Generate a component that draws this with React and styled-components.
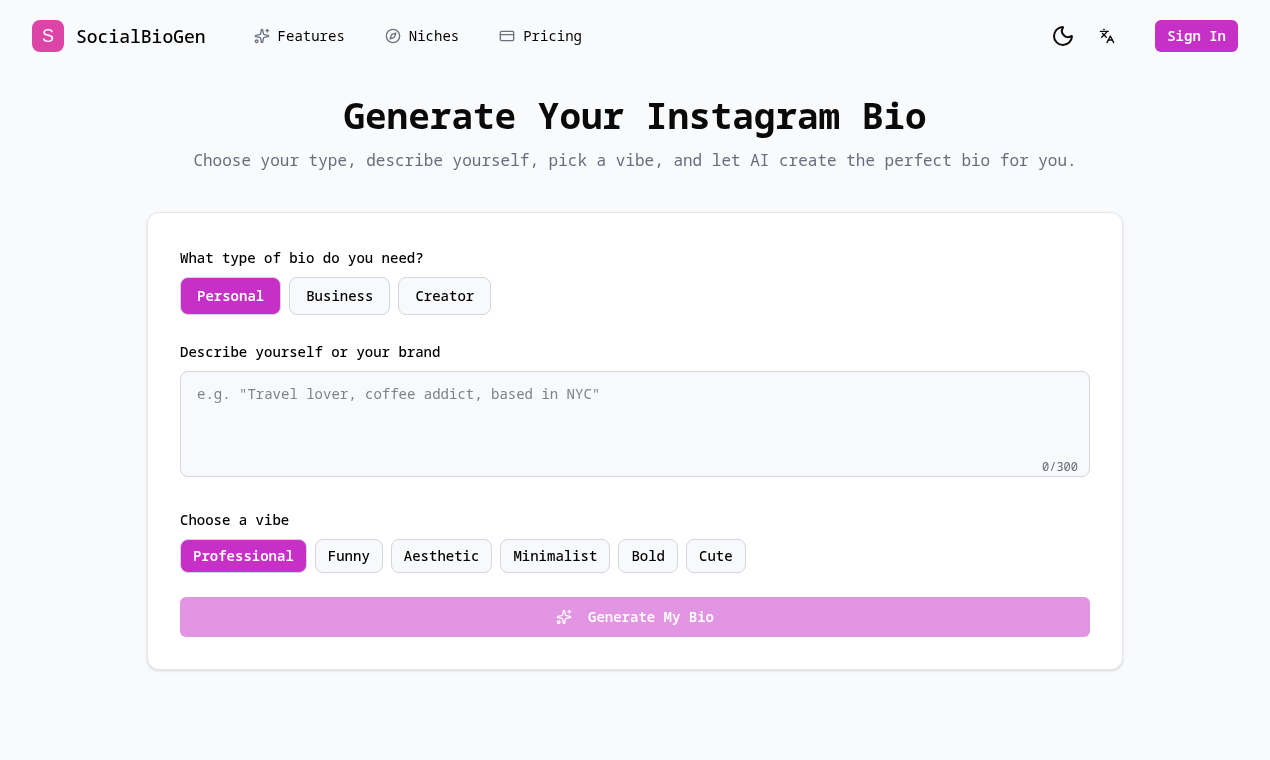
import React from "react";
import styled, { createGlobalStyle } from "styled-components";
import { Sparkles, Compass, CreditCard, Moon, Languages } from "lucide-react";

const Global = createGlobalStyle`
  html, body { margin: 0; padding: 0; background: #f9fafc; }
  body {
    font-family: "Noto Sans Mono", "DejaVu Sans Mono", monospace;
    color: #000;
  }
  * { box-sizing: border-box; }
`;

const Page = styled.div`
  width: 1270px;
  height: 760px;
  overflow: hidden;
  will-change: transform;
`;

const Header = styled.header`
  height: 72px;
  padding: 0 32px;
  display: flex;
  align-items: center;
`;

const Brand = styled.div`
  display: flex;
  align-items: center;
  gap: 12px;
  margin-right: 48px;
`;

const Logo = styled.div`
  width: 32px;
  height: 32px;
  border-radius: 8px;
  background: #dc44a8;
  color: #fff;
  display: flex;
  align-items: center;
  justify-content: center;
  font-family: "Liberation Sans", "Inter", sans-serif;
  font-size: 18px;
`;

const BrandName = styled.span`
  font-size: 18px;
  font-weight: 500;
`;

const Nav = styled.nav`
  display: flex;
  gap: 40px;
  flex: 1;
`;

const NavLink = styled.a`
  display: flex;
  align-items: center;
  gap: 8px;
  font-size: 14px;
  line-height: 20px;
  color: #000;
  svg { color: #6b7280; }
`;

const Actions = styled.div`
  display: flex;
  align-items: center;
  gap: 4px;
`;

const IconButton = styled.button`
  width: 40px;
  height: 40px;
  border: 0;
  padding: 0;
  background: transparent;
  color: #0a0a0a;
  display: flex;
  align-items: center;
  justify-content: center;
`;

const SignIn = styled.button`
  height: 32px;
  margin-left: 24px;
  padding: 0 12px;
  border: 0;
  border-radius: 6px;
  background: #c730c7;
  color: #fff;
  font: 600 14px/20px "Noto Sans Mono", "DejaVu Sans Mono", monospace;
`;

const Main = styled.main`
  display: flex;
  flex-direction: column;
  align-items: center;
`;

const Title = styled.h1`
  margin: 20px 0 0;
  font-size: 36px;
  line-height: 48px;
  font-weight: 700;
  color: #0a0a0a;
`;

const Subtitle = styled.p`
  margin: 8px 0 0;
  font-size: 16px;
  line-height: 24px;
  color: #666d7b;
`;

const Card = styled.section`
  width: 976px;
  margin-top: 40px;
  padding: 35px 32px 32px;
  background: #fff;
  border: 1px solid #e5e7eb;
  border-radius: 12px;
  box-shadow: 0 1px 3px rgba(0, 0, 0, 0.1), 0 1px 2px rgba(0, 0, 0, 0.06);
`;

const Label = styled.label`
  display: block;
  margin-bottom: 9px;
  font-size: 14px;
  line-height: 20px;
  font-weight: 500;
`;

const Choices = styled.div`
  display: flex;
  gap: 8px;
  margin-bottom: ${(p) => p.$after}px;
`;

const Choice = styled.button`
  height: ${(p) => (p.$small ? 34 : 38)}px;
  padding: 0 ${(p) => (p.$small ? 12 : 16)}px;
  border: 1px solid #d3d6de;
  border-radius: 8px;
  background: ${(p) => (p.$active ? "#c730c7" : "#f8f9fb")};
  color: ${(p) => (p.$active ? "#fff" : "#000")};
  font: ${(p) => (p.$active ? 600 : 500)} 14px/20px "Noto Sans Mono", "DejaVu Sans Mono", monospace;
`;

const TextBox = styled.div`
  position: relative;
  height: 106px;
  margin-bottom: 33px;
`;

const TextArea = styled.textarea`
  display: block;
  width: 100%;
  height: 100%;
  padding: 12px 16px;
  resize: none;
  border: 1px solid #d3d6de;
  border-radius: 8px;
  background: #f8f9fb;
  color: #000;
  font: 400 14px/20px "Noto Sans Mono", "DejaVu Sans Mono", monospace;
  &::placeholder { color: #7f8189; opacity: 1; }
`;

const Counter = styled.span`
  position: absolute;
  right: 12px;
  bottom: 2px;
  font-size: 12px;
  line-height: 16px;
  color: #666d7b;
`;

const Generate = styled.button`
  width: 100%;
  height: 40px;
  border: 0;
  border-radius: 6px;
  background: #e295e2;
  color: #fff;
  display: flex;
  align-items: center;
  justify-content: center;
  gap: 16px;
  font: 600 14px/20px "Noto Sans Mono", "DejaVu Sans Mono", monospace;
`;

const types = ["Personal", "Business", "Creator"];
const vibes = ["Professional", "Funny", "Aesthetic", "Minimalist", "Bold", "Cute"];

export default function App() {
  return (
    <Page>
      <Global />
      <Header>
        <Brand>
          <Logo>S</Logo>
          <BrandName>SocialBioGen</BrandName>
        </Brand>
        <Nav>
          <NavLink><Sparkles size={16} />Features</NavLink>
          <NavLink><Compass size={16} />Niches</NavLink>
          <NavLink><CreditCard size={16} />Pricing</NavLink>
        </Nav>
        <Actions>
          <IconButton><Moon size={24} /></IconButton>
          <IconButton><Languages size={16} /></IconButton>
          <SignIn>Sign In</SignIn>
        </Actions>
      </Header>
      <Main>
        <Title>Generate Your Instagram Bio</Title>
        <Subtitle>Choose your type, describe yourself, pick a vibe, and let AI create the perfect bio for you.</Subtitle>
        <Card>
          <Label>What type of bio do you need?</Label>
          <Choices $after={27}>
            {types.map((t, i) => (
              <Choice key={t} $active={i === 0}>{t}</Choice>
            ))}
          </Choices>
          <Label>Describe yourself or your brand</Label>
          <TextBox>
            <TextArea placeholder={'e.g. "Travel lover, coffee addict, based in NYC"'} />
            <Counter>0/300</Counter>
          </TextBox>
          <Label>Choose a vibe</Label>
          <Choices $after={24}>
            {vibes.map((v, i) => (
              <Choice key={v} $small $active={i === 0}>{v}</Choice>
            ))}
          </Choices>
          <Generate><Sparkles size={16} />Generate My Bio</Generate>
        </Card>
      </Main>
    </Page>
  );
}
